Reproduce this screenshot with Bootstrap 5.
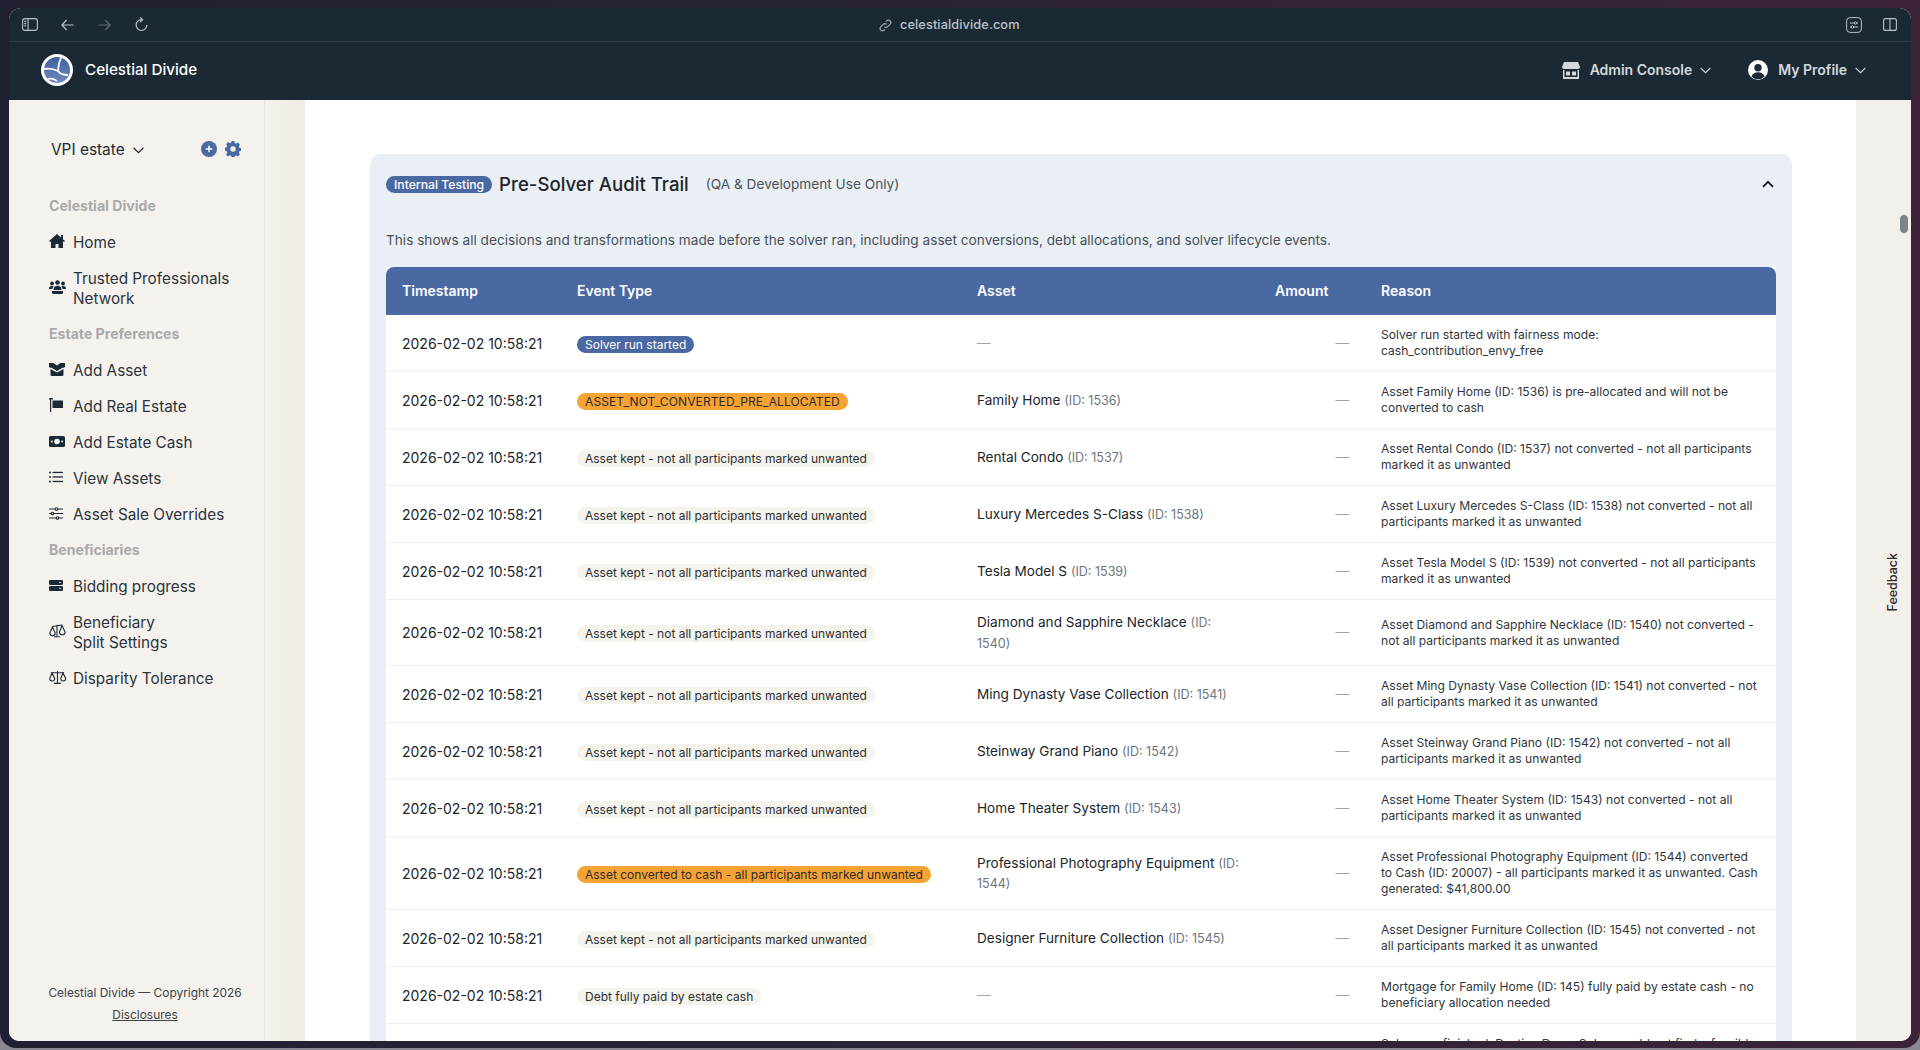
<!DOCTYPE html>
<html lang="en">
<head>
<meta charset="utf-8">
<title>Celestial Divide</title>
<link href="https://cdn.jsdelivr.net/npm/bootstrap@5.3.0/dist/css/bootstrap.min.css" rel="stylesheet">
<style>
html,body{height:100%;overflow:hidden;background:#8a8790;}
body{font-family:Inter,"Liberation Sans",sans-serif;color:#212529;}
.frame-outer{height:1048px;padding:8px 9px 7px 9px;border-radius:0 0 16px 16px;background:linear-gradient(90deg,#1f2031,#2c2336 50%,#3c2338);position:relative;}
.win{height:100%;border-radius:12px 12px 10px 10px;overflow:hidden;background:#f5f2ed;position:relative;}
.chrome-bar{height:34px;background:#1a2a35;border-bottom:1px solid #2b3b45;padding:0 14px 0 13px;color:#b9c3ca;position:relative;}
.chrome-url{position:absolute;left:870px;top:7px;font-size:12.750px;font-weight:500;color:#b9c3ca;line-height:20px;letter-spacing:.1px;}
.chrome-gap-a{width:23px}.chrome-gap-b{width:24px}
.app-nav{height:58px;background:#1b2935;padding:0 45px 2px 32px;}
.brand-txt{font-size:15.200px;font-weight:500;color:#fff;line-height:20px;padding:0;margin:0;}
.nav-act{font-size:14px;font-weight:600;color:#d3d8dc;line-height:20px;}
.body-wrap{height:calc(100% - 92px);}
.side-panel{width:256px;flex:none;background:#f5f2ed;border-right:1px solid #e8e4de;padding:0 0 15px 40px;}
.estate-row{height:32px;margin-top:34px;padding-right:23px;margin-bottom:22px;}
.estate-name{font-size:15.400px;color:#212b36;margin-left:2px;line-height:32px;}
.estate-tool{margin-bottom:2px;}
.sec-head{font-size:14.100px;font-weight:700;color:#a9a9a9;height:36px;line-height:36px;}
.side-item{display:flex;align-items:center;min-height:36px;padding:9px 0 7px;font-size:15.300px;line-height:20px;color:#2a343d;text-decoration:none;}
.side-ico{width:24px;flex:none;margin-right:0;display:flex;position:relative;top:-2px;}
.side-foot{margin-top:auto;font-size:11.900px;color:#3b4248;text-align:center;margin-left:-23px;line-height:22px;}
.side-foot a{color:#3b4248;}
.gutter-l{width:40px;flex:none;background:linear-gradient(90deg,#f4f1ec,#f1ede6);}
.gutter-r{width:55px;flex:none;background:#f3f0eb;}
.main-sheet{flex:1;background:#fff;padding:54px 64px 0 65px;overflow:hidden;min-width:0;}
.audit-box{background:#e9eff5;border-radius:10px 10px 0 0;padding:16px;border:0;width:1422px;}
.audit-head{height:28px;margin-top:0;}
.pill-b{font-size:12.200px;font-weight:500;line-height:17px;padding:0 8px;border-radius:9px;background:#4a68a2;color:#fff;display:inline-block;white-space:nowrap;}
.audit-title{font-size:18.600px;font-weight:500;color:#212529;margin:0 0 0 7px;line-height:28px;}
.audit-sub{font-size:13.650px;color:#4b5258;margin-left:17px;}
.audit-chev{margin-left:auto;margin-right:2px;}
.audit-desc{font-size:13.640px;color:#495057;line-height:21px;margin:32px 0 16px;}
.audit-table{table-layout:fixed;width:1390px;margin:0;background:#fff;font-size:13.600px;border-collapse:separate;border-spacing:0;}
.audit-table thead th{background:#4a68a2;color:#fff;font-weight:600;font-size:14px;height:48px;padding:0 16px 2px;vertical-align:middle;border:0;}
.audit-table thead th:first-child{border-top-left-radius:8px;}
.audit-table thead th:last-child{border-top-right-radius:8px;}
.audit-table th.amt-h{text-align:right;padding-right:37px;}
.audit-table td{padding:12px 16px;vertical-align:middle;border-bottom:1px solid #eef0f2;line-height:20.500px;color:#212529;background:#fff;box-shadow:none;}
.audit-table td.stamp{font-size:14px;padding-top:13px;padding-bottom:11px;}
.audit-table td.why{font-size:12.100px;line-height:16px;color:#2f363c;}
.audit-table td.amt{text-align:right;color:#a3a3a3;}
.audit-table td.emd{color:#a3a3a3;}
.row-fix{height:57px;}
.id-note{font-size:12.500px;color:#6c757d;line-height:1;}
.tag{display:inline-block;font-size:12px;line-height:17px;padding:0 8px;border-radius:9px;white-space:nowrap;vertical-align:middle;}
.tag-blue{background:#4a68a2;color:#fff;}
.tag-orange{background:#f7a334;color:#2b2b2b;}
.tag-caps{letter-spacing:.11px;}
.tag-plain{background:#f4f3ec;color:#2b2f33;}
.feedback-tab{position:absolute;right:10px;top:545px;writing-mode:vertical-rl;transform:rotate(180deg);font-size:12.500px;font-weight:500;color:#2b2b2b;line-height:16px;}
.scroll-thumb{position:absolute;right:3px;top:207px;width:8px;height:18px;border-radius:4px;background:#7d8588;}
</style>
</head>
<body>
<div class="frame-outer">
<div class="win d-flex flex-column">
  <div class="chrome-bar d-flex align-items-center flex-none">
    <svg width="16" height="13" viewBox="0 0 16 13" fill="none" stroke="#b9c3ca" stroke-width="1.1"><rect x=".6" y=".6" width="14.8" height="11.8" rx="2.5"/><path d="M6 .6v11.8M2.2 3.4h2M2.2 5.6h2M2.2 7.8h2"/></svg>
    <div class="chrome-gap-a"></div>
    <svg width="13" height="12" viewBox="0 0 13 12" fill="none" stroke="#b9c3ca" stroke-width="1.2"><path d="M12.5 6H1M5.6 1 .9 6l4.7 5"/></svg>
    <div class="chrome-gap-b"></div>
    <svg width="13" height="12" viewBox="0 0 13 12" fill="none" stroke="#5d6b74" stroke-width="1.2"><path d="M.5 6H12M7.4 1l4.7 5-4.7 5"/></svg>
    <div class="chrome-gap-b"></div>
    <svg width="13" height="15" viewBox="0 0 13 15" fill="none" stroke="#b9c3ca" stroke-width="1.2"><path d="M6.5 2.7a5.4 5.4 0 1 0 5.4 5.4M5.2 .4l2.4 2.3-2.4 2.3"/></svg>
    <div class="chrome-url d-flex align-items-center gap-2">
      <svg width="13" height="13" viewBox="0 0 13 13" fill="none" stroke="#9fabb3" stroke-width="1.2"><path d="M5.4 7.6a2.4 2.4 0 0 0 3.4 0l2.3-2.3a2.4 2.4 0 0 0-3.4-3.4l-.8.8M7.6 5.4a2.4 2.4 0 0 0-3.4 0L1.9 7.7a2.4 2.4 0 0 0 3.4 3.4l.8-.8"/></svg>
      <span>celestialdivide.com</span>
    </div>
    <div class="ms-auto d-flex align-items-center" style="gap:21px">
      <svg width="16" height="16" viewBox="0 0 16 16" fill="none" stroke="#b9c3ca" stroke-width="1"><rect x=".6" y=".6" width="14.8" height="14.8" rx="3.5"/><path d="M4 6h8M4 10h8"/><circle cx="9.5" cy="6" r="1.2" fill="#1a2a35"/><circle cx="6.5" cy="10" r="1.2" fill="#1a2a35"/></svg>
      <svg width="14" height="13" viewBox="0 0 14 13" fill="none" stroke="#b9c3ca" stroke-width="1.1"><rect x=".6" y=".6" width="12.8" height="11.8" rx="2"/><path d="M7 .6v11.8"/></svg>
    </div>
  </div>
  <nav class="navbar app-nav d-flex align-items-center flex-nowrap">
    <div class="d-flex align-items-center" style="gap:12px">
      <svg width="32" height="32" viewBox="0 0 32 32"><defs><linearGradient id="lg" x1="0" y1="0" x2="0" y2="1"><stop offset="0" stop-color="#3f5f9e"/><stop offset="1" stop-color="#6f8bbf"/></linearGradient></defs><circle cx="16" cy="16" r="16" fill="#fff"/><circle cx="16" cy="16" r="13" fill="url(#lg)"/><path d="M3 15c5-1 10 0 14 2 0-5 1-9 3-13.500M17 17c2 3 5 4 10 4M7 25c3-1 5-1 9 2" fill="none" stroke="#fff" stroke-width="1.800"/></svg>
      <span class="navbar-brand brand-txt">Celestial Divide</span>
    </div>
    <div class="d-flex align-items-center">
      <svg width="18" height="17" viewBox="0 0 18 17" fill="#d3d8dc"><path d="M2 0h14l2 5a2 2 0 0 1-2 2H2a2 2 0 0 1-2-2z"/><path d="M1 8h1.500v7h13V8H17v9H1z"/><rect x="4" y="9.500" width="4" height="4"/><rect x="10" y="9.500" width="4" height="4"/></svg>
      <span class="nav-act" style="margin-left:10px">Admin Console</span>
      <svg class="ms-2" width="11" height="7" viewBox="0 0 11 7" fill="none" stroke="#d3d8dc" stroke-width="1.200"><path d="M.6.800l4.900 4.900L10.400.800"/></svg>
      <svg style="margin-left:37px" width="20" height="20" viewBox="0 0 20 20"><circle cx="10" cy="10" r="10" fill="#fff"/><circle cx="10" cy="7.800" r="3.700" fill="#1b2935"/><path d="M3.500 16.500c1-3.200 3.500-4.200 6.500-4.200s5.500 1 6.500 4.200a9 9 0 0 1-13 0z" fill="#1b2935"/></svg>
      <span class="nav-act" style="margin-left:10px">My Profile</span>
      <svg class="ms-2" width="11" height="7" viewBox="0 0 11 7" fill="none" stroke="#d3d8dc" stroke-width="1.200"><path d="M.6.800l4.900 4.900L10.400.800"/></svg>
    </div>
  </nav>
  <div class="d-flex body-wrap">
    <aside class="side-panel d-flex flex-column">
      <div class="estate-row d-flex align-items-center">
        <span class="estate-name">VPI estate</span>
        <svg class="ms-2" width="11" height="7" viewBox="0 0 11 7" fill="none" stroke="#212b36" stroke-width="1.300"><path d="M.6.800l4.900 4.900L10.400.800"/></svg>
        <svg class="estate-tool" style="margin-left:auto" width="16" height="16" viewBox="0 0 16 16"><circle cx="8" cy="8" r="8" fill="#4a68a2"/><path d="M8 4.700v6.600M4.700 8h6.600" stroke="#fff" stroke-width="1.600"/></svg>
        <svg class="ms-2 estate-tool" width="16" height="16" viewBox="0 0 16 16"><path fill="#4a68a2" fill-rule="evenodd" d="M6.600 0h2.800l.4 2.100 1.300.6 1.800-1.100 2 2-1.100 1.800.6 1.300 2.100.4v2.800l-2.100.4-.6 1.300 1.100 1.800-2 2-1.800-1.100-1.300.6-.4 2.100H6.600l-.4-2.100-1.300-.6-1.800 1.100-2-2 1.100-1.800-.6-1.300L-.5 9.400V6.600l2.100-.4.600-1.300-1.100-1.800 2-2 1.800 1.100 1.300-.6zM8 5.300a2.700 2.700 0 1 0 0 5.400 2.700 2.700 0 0 0 0-5.400z"/></svg>
      </div>
      <div class="sec-head">Celestial Divide</div>
      <a class="side-item" href="#"><span class="side-ico"><svg width="16" height="14" viewBox="0 0 16 14" fill="#1b2935"><path d="M8 0 0 7l1 1.100 1-.9V14h4.500v-4h3v4H14V7.200l1 .9L16 7l-2-1.800V1h-2v2.400z"/></svg></span>Home</a>
      <a class="side-item" href="#"><span class="side-ico"><svg width="17" height="14" viewBox="0 0 17 14" fill="#1b2935"><circle cx="3" cy="3.500" r="1.900"/><circle cx="8.500" cy="2.500" r="2.300"/><circle cx="14" cy="3.500" r="1.900"/><path d="M0 9c0-2 1-2.900 2.900-2.900 1 0 1.500.3 1.800.6C3.900 7.400 3.500 8 3.400 9zM17 9c0-2-1-2.900-2.900-2.900-1 0-1.500.3-1.800.6.800.7 1.200 1.300 1.300 2.300zM4.500 10c0-3 1.500-4.300 4-4.300s4 1.300 4 4.300zM3 11h11v1.500a1.500 1.500 0 0 1-1.500 1.500h-8A1.500 1.500 0 0 1 3 12.500z"/></svg></span><span>Trusted Professionals<br>Network</span></a>
      <div class="sec-head">Estate Preferences</div>
      <a class="side-item" href="#"><span class="side-ico"><svg width="16" height="13" viewBox="0 0 16 13" fill="#1b2935"><path d="M0 0h4.500L8 2.500 11.500 0H16v4l-2 1v-.5L8 8 2 4.500V5L0 4zM1.500 6 8 9.500 14.500 6v5.500A1.500 1.500 0 0 1 13 13H3a1.500 1.500 0 0 1-1.500-1.500z"/></svg></span>Add Asset</a>
      <a class="side-item" href="#"><span class="side-ico"><svg width="14" height="14" viewBox="0 0 14 14" fill="#1b2935"><path d="M0 0h4v1.500H2.200V14H1V1.500H0z"/><rect x="3.500" y="2.500" width="10.500" height="7.500" rx=".5"/></svg></span>Add Real Estate</a>
      <a class="side-item" href="#"><span class="side-ico"><svg width="16" height="11" viewBox="0 0 16 11"><rect width="16" height="11" rx="1.500" fill="#1b2935"/><circle cx="8" cy="5.500" r="2.800" fill="#f5f2ed"/><circle cx="2.800" cy="5.500" r="1" fill="#f5f2ed"/><circle cx="13.200" cy="5.500" r="1" fill="#f5f2ed"/></svg></span>Add Estate Cash</a>
      <a class="side-item" href="#"><span class="side-ico"><svg width="14" height="12" viewBox="0 0 14 12" fill="#1b2935"><circle cx="1" cy="1.500" r="1"/><circle cx="1" cy="6" r="1"/><circle cx="1" cy="10.500" r="1"/><rect x="3.500" y=".8" width="10.500" height="1.300"/><rect x="3.500" y="5.300" width="10.500" height="1.300"/><rect x="3.500" y="9.800" width="10.500" height="1.300"/></svg></span>View Assets</a>
      <a class="side-item" href="#"><span class="side-ico"><svg width="14" height="13" viewBox="0 0 14 13" fill="none" stroke="#1b2935" stroke-width="1.100"><path d="M0 2h6M9 2h5M0 6.500h2M5 6.500h9M0 11h7M10 11h4"/><circle cx="7.500" cy="2" r="1.300"/><circle cx="3.500" cy="6.500" r="1.300"/><circle cx="8.500" cy="11" r="1.300"/></svg></span>Asset Sale Overrides</a>
      <div class="sec-head">Beneficiaries</div>
      <a class="side-item" href="#"><span class="side-ico"><svg width="14" height="11" viewBox="0 0 14 11" fill="#1b2935"><rect width="14" height="5" rx="1.300"/><rect y="6" width="14" height="5" rx="1.300"/><circle cx="11" cy="2.500" r=".8" fill="#f5f2ed"/><circle cx="11" cy="8.500" r=".8" fill="#f5f2ed"/></svg></span>Bidding progress</a>
      <a class="side-item" href="#"><span class="side-ico"><svg width="17" height="14" viewBox="0 0 17 14" fill="none" stroke="#1b2935" stroke-width="1.100"><path d="M8 1v11M5 12.800h6M3 2.500 13 1"/><path d="M3.500 3 .8 9a2.700 2.700 0 0 0 5.400 0zM13 1.500 10.500 8a2.800 2.800 0 0 0 5.600 0z"/></svg></span><span>Beneficiary<br>Split Settings</span></a>
      <a class="side-item" href="#"><span class="side-ico"><svg width="17" height="13" viewBox="0 0 17 13" fill="none" stroke="#1b2935" stroke-width="1.100"><path d="M8.500 0v12M5 12.400h7M2 1.700h13"/><path d="M3 2 .7 7.500a2.500 2.500 0 0 0 5 0zM14 2l-2.300 5.500a2.500 2.500 0 0 0 5 0z"/></svg></span>Disparity Tolerance</a>
      <div class="side-foot">Celestial Divide — Copyright 2026<br><a href="#">Disclosures</a></div>
    </aside>
    <div class="gutter-l"></div>
    <main class="main-sheet">
      <section class="audit-box">
        <div class="audit-head d-flex align-items-center">
          <span class="pill-b">Internal Testing</span>
          <h5 class="audit-title">Pre-Solver Audit Trail</h5>
          <span class="audit-sub">(QA &amp; Development Use Only)</span>
          <svg class="audit-chev" width="12" height="8" viewBox="0 0 12 8" fill="none" stroke="#1a1a1a" stroke-width="1.800"><path d="M1 6.800 6 1.800l5 5"/></svg>
        </div>
        <p class="audit-desc">This shows all decisions and transformations made before the solver ran, including asset conversions, debt allocations, and solver lifecycle events.</p>
        <table class="table audit-table">
          <colgroup><col style="width:175px"><col style="width:400px"><col style="width:298px"><col style="width:106px"><col style="width:411px"></colgroup>
          <thead><tr><th>Timestamp</th><th>Event Type</th><th>Asset</th><th class="amt-h">Amount</th><th>Reason</th></tr></thead>
          <tbody>
            <tr class="row-fix"><td class="stamp">2026-02-02 10:58:21</td><td><span class="tag tag-blue">Solver run started</span></td><td class="emd">—</td><td class="amt">—</td><td class="why">Solver run started with fairness mode:<br>cash_contribution_envy_free</td></tr>
            <tr class="row-fix"><td class="stamp">2026-02-02 10:58:21</td><td><span class="tag tag-orange tag-caps">ASSET_NOT_CONVERTED_PRE_ALLOCATED</span></td><td>Family Home <span class="id-note">(ID: 1536)</span></td><td class="amt">—</td><td class="why">Asset Family Home (ID: 1536) is pre-allocated and will not be converted to cash</td></tr>
            <tr class="row-fix"><td class="stamp">2026-02-02 10:58:21</td><td><span class="tag tag-plain">Asset kept - not all participants marked unwanted</span></td><td>Rental Condo <span class="id-note">(ID: 1537)</span></td><td class="amt">—</td><td class="why">Asset Rental Condo (ID: 1537) not converted - not all participants marked it as unwanted</td></tr>
            <tr class="row-fix"><td class="stamp">2026-02-02 10:58:21</td><td><span class="tag tag-plain">Asset kept - not all participants marked unwanted</span></td><td>Luxury Mercedes S-Class <span class="id-note">(ID: 1538)</span></td><td class="amt">—</td><td class="why">Asset Luxury Mercedes S-Class (ID: 1538) not converted - not all participants marked it as unwanted</td></tr>
            <tr class="row-fix"><td class="stamp">2026-02-02 10:58:21</td><td><span class="tag tag-plain">Asset kept - not all participants marked unwanted</span></td><td>Tesla Model S <span class="id-note">(ID: 1539)</span></td><td class="amt">—</td><td class="why">Asset Tesla Model S (ID: 1539) not converted - not all participants marked it as unwanted</td></tr>
            <tr><td class="stamp">2026-02-02 10:58:21</td><td><span class="tag tag-plain">Asset kept - not all participants marked unwanted</span></td><td>Diamond and Sapphire Necklace <span class="id-note">(ID: 1540)</span></td><td class="amt">—</td><td class="why">Asset Diamond and Sapphire Necklace (ID: 1540) not converted - not all participants marked it as unwanted</td></tr>
            <tr class="row-fix"><td class="stamp">2026-02-02 10:58:21</td><td><span class="tag tag-plain">Asset kept - not all participants marked unwanted</span></td><td>Ming Dynasty Vase Collection <span class="id-note">(ID: 1541)</span></td><td class="amt">—</td><td class="why">Asset Ming Dynasty Vase Collection (ID: 1541) not converted - not all participants marked it as unwanted</td></tr>
            <tr class="row-fix"><td class="stamp">2026-02-02 10:58:21</td><td><span class="tag tag-plain">Asset kept - not all participants marked unwanted</span></td><td>Steinway Grand Piano <span class="id-note">(ID: 1542)</span></td><td class="amt">—</td><td class="why">Asset Steinway Grand Piano (ID: 1542) not converted - not all participants marked it as unwanted</td></tr>
            <tr class="row-fix"><td class="stamp">2026-02-02 10:58:21</td><td><span class="tag tag-plain">Asset kept - not all participants marked unwanted</span></td><td>Home Theater System <span class="id-note">(ID: 1543)</span></td><td class="amt">—</td><td class="why">Asset Home Theater System (ID: 1543) not converted - not all participants marked it as unwanted</td></tr>
            <tr><td class="stamp">2026-02-02 10:58:21</td><td><span class="tag tag-orange">Asset converted to cash - all participants marked unwanted</span></td><td>Professional Photography Equipment <span class="id-note">(ID: 1544)</span></td><td class="amt">—</td><td class="why">Asset Professional Photography Equipment (ID: 1544) converted to Cash (ID: 20007) - all participants marked it as unwanted. Cash generated: $41,800.00</td></tr>
            <tr class="row-fix"><td class="stamp">2026-02-02 10:58:21</td><td><span class="tag tag-plain">Asset kept - not all participants marked unwanted</span></td><td>Designer Furniture Collection <span class="id-note">(ID: 1545)</span></td><td class="amt">—</td><td class="why">Asset Designer Furniture Collection (ID: 1545) not converted - not all participants marked it as unwanted</td></tr>
            <tr class="row-fix"><td class="stamp">2026-02-02 10:58:21</td><td><span class="tag tag-plain">Debt fully paid by estate cash</span></td><td class="emd">—</td><td class="amt">—</td><td class="why">Mortgage for Family Home (ID: 145) fully paid by estate cash - no beneficiary allocation needed</td></tr>
            <tr class="row-fix"><td class="stamp">2026-02-02 10:58:21</td><td><span class="tag tag-plain">Solver run completed</span></td><td class="emd">—</td><td class="amt">—</td><td class="why">Solver run finished: Routine Done. Solver could not find a feasible allocation in time</td></tr>
          </tbody>
        </table>
      </section>
    </main>
    <div class="gutter-r"></div>
  </div>
  <div class="feedback-tab">Feedback</div>
  <div class="scroll-thumb"></div>
</div>
</div>
<script src="https://cdn.jsdelivr.net/npm/bootstrap@5.3.0/dist/js/bootstrap.bundle.min.js"></script>
</body>
</html>
